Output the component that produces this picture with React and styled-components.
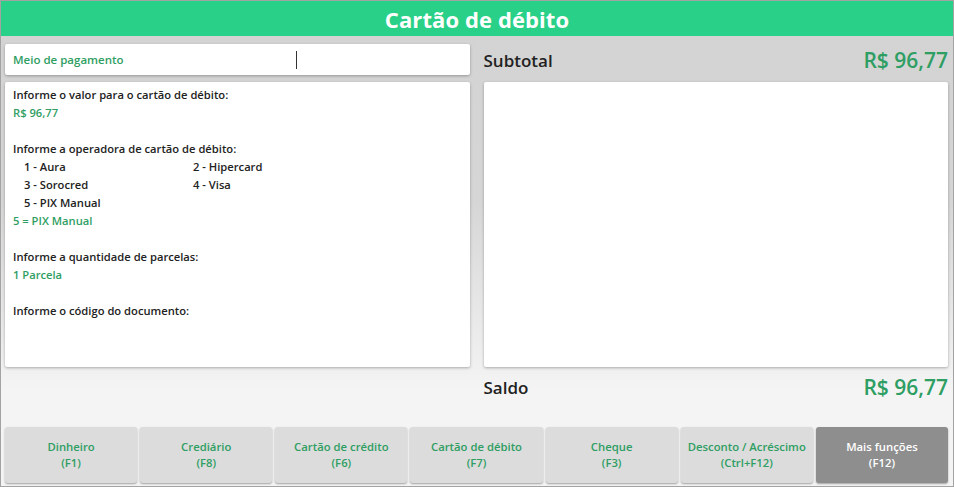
import React from 'react';
import styled, { createGlobalStyle } from 'styled-components';

const GlobalStyle = createGlobalStyle`
  html, body {
    margin: 0;
    padding: 0;
  }
  body {
    font-family: 'Open Sans', 'Noto Sans', sans-serif;
  }
`;

const green = '#2f9e63';

const Frame = styled.div`
  width: 954px;
  height: 487px;
  box-sizing: border-box;
  border: 1px solid #a3a3a3;
  display: flex;
  flex-direction: column;
  background: linear-gradient(#d3d3d3 0px, #d6d6d6 200px, #f4f4f4 390px, #f4f4f4 100%);
`;

const Header = styled.div`
  height: 35px;
  flex-shrink: 0;
  background: #29d087;
  color: #fff;
  font-size: 22px;
  font-weight: 700;
  display: flex;
  align-items: center;
  justify-content: center;
  letter-spacing: 0.1px;
`;

const Main = styled.div`
  display: flex;
  gap: 14px;
  padding: 8px 5px 0 4px;
`;

const Column = styled.div`
  width: 465px;
  display: flex;
  flex-direction: column;
  gap: 6px;
`;

const Card = styled.div`
  background: #fff;
  border-radius: 2px;
  box-shadow: 0 1px 3px rgba(0, 0, 0, 0.3);
`;

const InputCard = styled(Card)`
  height: 31px;
  margin-bottom: 1px;
  display: flex;
  align-items: center;
  padding-left: 8px;
  font-size: 11.5px;
  color: ${green};
  font-weight: 600;
`;

const Label = styled.span`
  width: 283px;
`;

const Caret = styled.span`
  width: 1px;
  height: 18px;
  background: #333;
`;

const InfoCard = styled(Card)`
  height: 285px;
  box-sizing: border-box;
  padding: 4px 8px;
  font-size: 11.2px;
  line-height: 18px;
`;

const Line = styled.div`
  color: ${(p) => (p.$green ? green : '#222')};
  font-weight: 600;
  min-height: 18px;
`;

const Options = styled.div`
  display: grid;
  grid-template-columns: 169px auto;
  padding-left: 11px;
  color: #222;
  font-weight: 600;
`;

const TotalRow = styled.div`
  height: ${(p) => p.$h || 32}px;
  display: flex;
  align-items: center;
  justify-content: space-between;
`;

const TotalLabel = styled.span`
  font-size: 17px;
  font-weight: 600;
  color: #222;
`;

const TotalValue = styled.span`
  font-size: 21px;
  font-weight: 600;
  color: #2e9e63;
`;

const ListBox = styled(Card)`
  height: 285px;
`;

const Footer = styled.div`
  display: flex;
  gap: 3px;
  padding: 0 5px 0 4px;
  margin-top: auto;
  margin-bottom: 3px;
`;

const FnButton = styled.button`
  flex: 1;
  height: 56px;
  border: none;
  border-radius: 3px;
  background: ${(p) => (p.$dark ? '#8e8e8e' : '#dcdcdc')};
  color: ${(p) => (p.$dark ? '#fff' : green)};
  font-family: inherit;
  font-size: 11.3px;
  font-weight: 600;
  line-height: 16px;
  box-shadow: 0 1px 2px rgba(0, 0, 0, 0.35);
  cursor: pointer;
  padding: 0;
`;

const buttons = [
  ['Dinheiro', '(F1)'],
  ['Crediário', '(F8)'],
  ['Cartão de crédito', '(F6)'],
  ['Cartão de débito', '(F7)'],
  ['Cheque', '(F3)'],
  ['Desconto / Acréscimo', '(Ctrl+F12)'],
  ['Mais funções', '(F12)'],
];

const App = () => {
  return (
    <>
      <GlobalStyle />
      <Frame>
        <Header>Cartão de débito</Header>
        <Main>
          <Column>
            <InputCard>
              <Label>Meio de pagamento</Label>
              <Caret />
            </InputCard>
            <InfoCard>
              <Line>Informe o valor para o cartão de débito:</Line>
              <Line $green>R$ 96,77</Line>
              <Line />
              <Line>Informe a operadora de cartão de débito:</Line>
              <Options>
                <span>1 - Aura</span>
                <span>2 - Hipercard</span>
                <span>3 - Sorocred</span>
                <span>4 - Visa</span>
                <span>5 - PIX Manual</span>
              </Options>
              <Line $green>5 = PIX Manual</Line>
              <Line />
              <Line>Informe a quantidade de parcelas:</Line>
              <Line $green>1 Parcela</Line>
              <Line />
              <Line>Informe o código do documento:</Line>
            </InfoCard>
          </Column>
          <Column>
            <TotalRow>
              <TotalLabel>Subtotal</TotalLabel>
              <TotalValue>R$ 96,77</TotalValue>
            </TotalRow>
            <ListBox />
            <TotalRow $h={28}>
              <TotalLabel>Saldo</TotalLabel>
              <TotalValue>R$ 96,77</TotalValue>
            </TotalRow>
          </Column>
        </Main>
        <Footer>
          {buttons.map(([name, key], i) => (
            <FnButton key={name} $dark={i === buttons.length - 1}>
              {name}
              <br />
              {key}
            </FnButton>
          ))}
        </Footer>
      </Frame>
    </>
  );
};

export default App;
